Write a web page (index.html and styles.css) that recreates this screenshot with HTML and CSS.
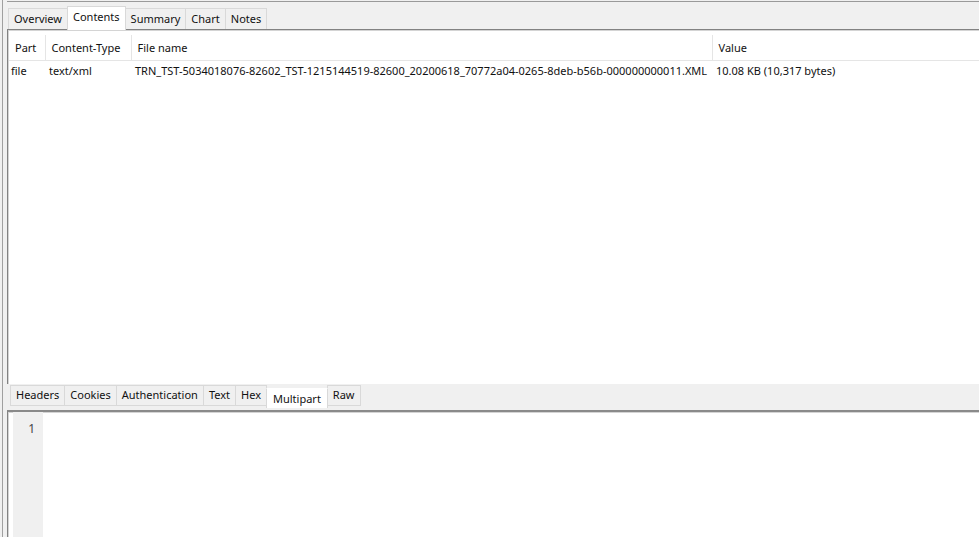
FILE: index.html
```html
<!DOCTYPE html>
<html>
<head>
  <meta charset="UTF-8">
  <title>Multipart inspector</title>
  <link rel="stylesheet" href="styles.css">
</head>
<body>
  <div class="frame">
    <!-- Top pane: request body parts -->
    <div class="top-pane">
      <div class="tabs top-tabs">
        <div class="tab">Overview</div>
        <div class="tab active">Contents</div>
        <div class="tab">Summary</div>
        <div class="tab">Chart</div>
        <div class="tab">Notes</div>
      </div>
      <div class="panel parts-panel">
        <table class="parts">
          <colgroup>
            <col class="col-part">
            <col class="col-type">
            <col class="col-name">
            <col class="col-value">
          </colgroup>
          <thead>
            <tr>
              <th>Part</th>
              <th>Content-Type</th>
              <th>File name</th>
              <th>Value</th>
            </tr>
          </thead>
          <tbody>
            <tr>
              <td>file</td>
              <td>text/xml</td>
              <td>TRN_TST-5034018076-82602_TST-1215144519-82600_20200618_70772a04-0265-8deb-b56b-000000000011.XML</td>
              <td>10.08 KB (10,317 bytes)</td>
            </tr>
          </tbody>
        </table>
      </div>
    </div>

    <!-- Bottom pane: viewers -->
    <div class="bottom-pane">
      <div class="tabs bottom-tabs">
        <div class="tab">Headers</div>
        <div class="tab">Cookies</div>
        <div class="tab">Authentication</div>
        <div class="tab">Text</div>
        <div class="tab">Hex</div>
        <div class="tab active">Multipart</div>
        <div class="tab">Raw</div>
      </div>
      <div class="panel editor">
        <div class="gutter">1</div>
        <div class="code"></div>
      </div>
    </div>
  </div>
</body>
</html>
```

FILE: styles.css
```css
body {
  margin: 0;
  width: 979px;
  height: 537px;
  overflow: hidden;
  background-color: #f0f0f0;
  font-family: "Noto Sans", "Open Sans", sans-serif;
  font-size: 11px;
  color: #111;
}

.frame {
  margin-left: 2px;
  height: 537px;
  border-left: 1px solid #a0a0a0;
  display: flex;
  flex-direction: column;
}

/* Top pane */
.top-pane {
  margin-top: 1px;
  margin-left: 4px;
  height: 382px;
  border-top: 1px solid #9a9a9a;
  display: flex;
  flex-direction: column;
}

/* Tabs */
.tabs {
  display: flex;
  align-items: flex-end;
  flex-shrink: 0;
}

.tab {
  height: 20px;
  line-height: 20px;
  padding: 0 5px;
  border: 1px solid #d9d9d9;
  border-bottom: none;
  margin-right: -1px;
  background-color: #f0f0f0;
  white-space: nowrap;
}

.tab.active {
  background-color: #fff;
  position: relative;
  z-index: 1;
}

.top-tabs {
  height: 27px;
  padding-left: 1px;
}

.top-tabs .tab.active {
  height: 23px;
  line-height: 19px;
  margin-bottom: -1px;
}

.bottom-tabs {
  height: 26px;
  padding-left: 3px;
  align-items: flex-start;
}

.bottom-tabs .tab {
  margin-top: 1px;
  height: 19px;
  line-height: 18px;
  border-bottom: 1px solid #d9d9d9;
}

.bottom-tabs .tab.active {
  margin-top: 4px;
  height: 19px;
  line-height: 20px;
  padding: 0 6px;
  border-bottom: none;
  border-top-color: #fff;
}

/* Panels */
.panel {
  background-color: #fff;
  border-top: 1px solid #828282;
  border-left: 1px solid #828282;
  box-shadow: inset 1px 1px 0 #d4d4d4;
}

.parts-panel {
  flex: 1;
  padding-top: 5px;
  padding-left: 1px;
}

/* Parts table */
.parts {
  border-collapse: collapse;
  table-layout: fixed;
  width: 100%;
}

.col-part { width: 36px; }
.col-type { width: 86px; }
.col-name { width: 581px; }

.parts th {
  height: 25px;
  padding: 0 0 0 6px;
  font-weight: normal;
  text-align: left;
  border-left: 1px solid #e5e5e5;
  border-bottom: 1px solid #e5e5e5;
}

.parts th:first-child {
  border-left: none;
}

.parts td {
  height: 19px;
  padding: 0 0 0 4px;
  white-space: nowrap;
  overflow: hidden;
}

.parts td:first-child {
  padding-left: 2px;
}

/* Bottom pane */
.bottom-pane {
  flex: 1;
  margin-left: 4px;
  display: flex;
  flex-direction: column;
}

.editor {
  flex: 1;
  display: flex;
  border-top: 2px solid #8a8a8a;
  padding-left: 2px;
}

.gutter {
  width: 22px;
  padding: 8px 8px 0 0;
  margin-left: 3px;
  text-align: right;
  background-color: #f0f0f0;
  color: #444;
  font-size: 12px;
}

.code {
  flex: 1;
}
```
